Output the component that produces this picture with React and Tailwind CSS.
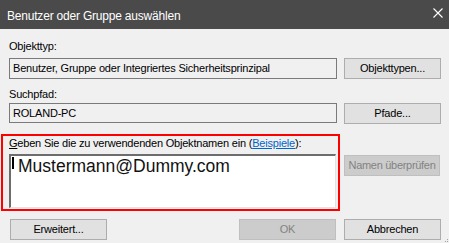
import React from "react";

const font = { fontFamily: '"Liberation Sans", Arial, sans-serif' };

function Btn({ children, disabled, className = "" }) {
  return (
    <div
      className={
        "h-[21px] flex items-center justify-center border text-[11px] leading-none whitespace-nowrap " +
        (disabled
          ? "bg-[#cccccc] border-[#bfbfbf] text-[#838383] "
          : "bg-[#e1e1e1] border-[#adadad] text-black ") +
        className
      }
    >
      {children}
    </div>
  );
}

export default function App() {
  return (
    <div
      className="w-[449px] h-[243px] bg-[#f0f0f0] overflow-hidden relative text-black"
      style={font}
    >
      <div className="h-[29px] bg-[#4a4a4a] flex items-start justify-between pl-[7px] pr-[6px]">
        <span className="text-white text-[12px] leading-[16px] tracking-[-0.2px] mt-[8px] whitespace-nowrap">
          Benutzer oder Gruppe auswählen
        </span>
        <svg width="10" height="10" viewBox="0 0 10 10" className="mt-[8px]">
          <path d="M0.5 0.5 L9.5 9.5 M9.5 0.5 L0.5 9.5" stroke="white" strokeWidth="1.1" />
        </svg>
      </div>

      <div className="pl-[9px] pt-[9px] text-[11px] tracking-[-0.2px]">
        <div className="leading-[16px] h-[20px] whitespace-nowrap">Objekttyp:</div>
        <div className="flex gap-[7px]">
          <div className="w-[328px] h-[21px] border border-[#7a7a7a] bg-[#f0f0f0] flex items-center pl-[3px] whitespace-nowrap">
            Benutzer, Gruppe oder Integriertes Sicherheitsprinzipal
          </div>
          <Btn className="w-[97px] tracking-[-0.2px]">Objekttypen...</Btn>
        </div>

        <div className="leading-[16px] h-[17px] mt-[7px] whitespace-nowrap">Suchpfad:</div>
        <div className="flex gap-[7px]">
          <div className="w-[328px] h-[20px] border border-[#7a7a7a] bg-[#f0f0f0] flex items-center pl-[3px] whitespace-nowrap">
            ROLAND-PC
          </div>
          <Btn className="w-[97px] h-[20px] tracking-[-0.2px]">Pfade...</Btn>
        </div>
      </div>

      <div className="flex mt-[10px]">
        <div className="ml-[1px] w-[339px] h-[77px] border-2 border-[#ff0000] pl-[6px]">
          <div className="text-[11px] tracking-[-0.2px] leading-[14px] h-[18px] whitespace-nowrap">
            <span className="underline">G</span>eben Sie die zu verwendenden Objektnamen ein (<span className="text-[#0066cc] underline">Beispiele</span>):
          </div>
          <div className="w-[327px] h-[54px] bg-white border-t-2 border-l-2 border-t-[#6d6d6d] border-l-[#6d6d6d] border-r border-b border-r-[#e3e3e3] border-b-[#e3e3e3] flex items-start pl-[1px]">
            <div className="w-[2px] h-[12px] bg-black mt-[1px] shrink-0" />
            <span className="text-[17.5px] leading-[20px] ml-[4px] text-[#111] whitespace-nowrap">
              Mustermann@Dummy.com
            </span>
          </div>
        </div>
        <Btn disabled className="w-[96px] ml-[4px] mt-[21px] h-[20px] text-[10.5px] tracking-[-0.3px]">
          Namen überprüfen
        </Btn>
      </div>

      <div className="flex mt-[8px]">
        <Btn className="w-[97px] ml-[10px] tracking-[-0.2px]">Erweitert...</Btn>
        <Btn disabled className="w-[97px] ml-[132px] tracking-[-0.2px]">OK</Btn>
        <Btn className="w-[97px] ml-[8px] tracking-[-0.2px]">Abbrechen</Btn>
      </div>

      <div className="absolute right-[1px] bottom-[1px] flex flex-col items-end gap-[1px]">
        <div className="w-[1px] h-[1px] bg-[#a0a0a0]" />
        <div className="flex gap-[1px]">
          <div className="w-[1px] h-[1px] bg-[#a0a0a0]" />
          <div className="w-[1px] h-[1px] bg-[#a0a0a0]" />
        </div>
      </div>
    </div>
  );
}
